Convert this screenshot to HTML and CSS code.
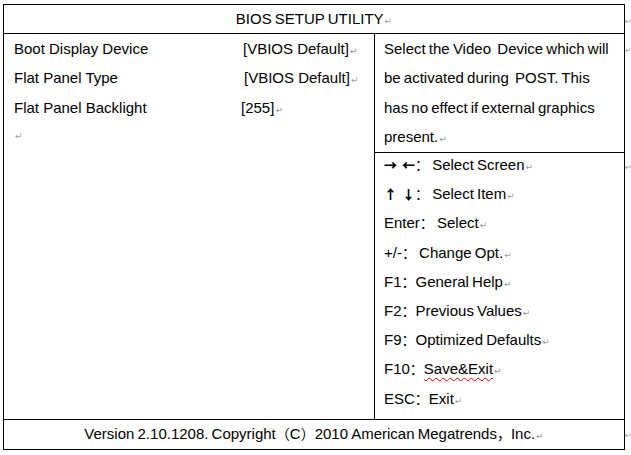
FILE: index.html
```html
<!DOCTYPE html>
<html lang="en">
<head>
<meta charset="utf-8">
<title>BIOS SETUP UTILITY</title>
<link rel="stylesheet" href="styles.css">
</head>
<body>
<div class="sheet">
  <div class="cell head">BIOS SETUP UTILITY<span class="pm">↵</span></div>
  <div class="mark m1"><span class="pm">↵</span></div>

  <div class="cell left">
    <div class="opt"><span class="lab">Boot Display Device</span><span class="val s2">[VBIOS Default]<span class="pm">↵</span></span></div>
    <div class="opt"><span class="lab">Flat Panel Type</span><span class="val s3">[VBIOS Default]<span class="pm">↵</span></span></div>
    <div class="opt"><span class="lab">Flat Panel Backlight</span><span class="val">[255]<span class="pm">↵</span></span></div>
    <div class="opt"><span class="pm">↵</span></div>
  </div>
  <div class="cell help">
    <p class="ln">Select the Video&nbsp; Device which will</p>
    <p class="ln">be activated during&nbsp; POST. This</p>
    <p class="ln">has no effect if external graphics</p>
    <p class="ln">present.<span class="pm">↵</span></p>
  </div>
  <div class="mark m2"><span class="pm">↵</span></div>

  <div class="cell keys">
    <p class="ln"><span class="arr">→ ←</span><span class="cjk">：</span> Select Screen<span class="pm">↵</span></p>
    <p class="ln"><span class="arr">↑ ↓</span><span class="cjk">：</span> Select Item<span class="pm">↵</span></p>
    <p class="ln">Enter<span class="cjk">：</span> Select<span class="pm">↵</span></p>
    <p class="ln">+/-<span class="cjk">：</span> Change Opt.<span class="pm">↵</span></p>
    <p class="ln">F1<span class="cjk">：</span>General Help<span class="pm">↵</span></p>
    <p class="ln">F2<span class="cjk">：</span>Previous Values<span class="pm">↵</span></p>
    <p class="ln">F9<span class="cjk">：</span>Optimized Defaults<span class="pm">↵</span></p>
    <p class="ln">F10<span class="cjk">：</span><span class="spell">Save&amp;Exit</span><span class="pm">↵</span></p>
    <p class="ln">ESC<span class="cjk">：</span>Exit<span class="pm">↵</span></p>
  </div>
  <div class="mark m3"><span class="pm">↵</span></div>

  <div class="cell foot">Version 2.10.1208. Copyright<span class="cjk">（</span>C<span class="cjk">）</span>2010 American Megatrends<span class="cjk">，</span>Inc.<span class="pm">↵</span></div>
  <div class="mark m4"><span class="pm">↵</span></div>
</div>
</body>
</html>
```

FILE: styles.css
```css
html, body {
  margin: 0;
  padding: 0;
  background: #ffffff;
}

body {
  padding: 4px 0 0 3px;
  overflow: hidden;
  font-family: "Liberation Sans", "Noto Sans CJK SC", sans-serif;
  font-size: 15px;
  word-spacing: -1px;
  color: #000000;
}

.sheet {
  display: grid;
  grid-template-columns: 371px 251px 6px;
  grid-template-rows: 29px 119px 267px 31px;
}

.cell {
  box-sizing: border-box;
  border-top: 1px solid #000;
  border-left: 1px solid #000;
  white-space: nowrap;
}

.head {
  grid-column: 1 / 3;
  grid-row: 1;
  border-right: 1px solid #000;
  text-align: center;
  line-height: 28px;
}

.left {
  grid-column: 1;
  grid-row: 2 / 4;
  padding-left: 10px;
  word-spacing: 0;
}

.opt {
  display: flex;
  line-height: 29.3px;
  height: 29.3px;
}

.lab {
  width: 227px;
  flex: none;
}

.val.s2 { padding-left: 2px; }
.val.s3 { padding-left: 3px; }

.help {
  grid-column: 2;
  grid-row: 2;
  border-right: 1px solid #000;
  padding-left: 9px;
}

.keys {
  grid-column: 2;
  grid-row: 3;
  border-right: 1px solid #000;
  padding-left: 9px;
}

.keys .ln:first-child {
  margin-top: -3px;
}

.ln {
  margin: 0;
  line-height: 29.3px;
  height: 29.3px;
}

.keys .ln {
  line-height: 29.2px;
  height: 29.2px;
}

.foot {
  grid-column: 1 / 3;
  grid-row: 4;
  border-right: 1px solid #000;
  border-bottom: 1px solid #000;
  text-align: center;
  line-height: 26px;
}

.cjk {
  font-family: "Noto Sans CJK SC", sans-serif;
  font-size: 14px;
}

.arr {
  font-family: "Noto Sans CJK SC", sans-serif;
  font-weight: 900;
  font-size: 13px;
  word-spacing: 2px;
}

.spell {
  text-decoration: underline wavy #e00000;
  text-decoration-thickness: 1px;
  text-underline-offset: 3px;
}

.pm {
  font-family: "DejaVu Sans", sans-serif;
  font-size: 9px;
  color: #9a9a9a;
  margin-left: 1px;
}

.mark {
  white-space: nowrap;
}

.mark .pm {
  font-size: 8px;
  margin-left: 0;
}

.m1 { grid-row: 1; grid-column: 3; line-height: 30px; }
.m2 { grid-row: 2; grid-column: 3; line-height: 30px; }
.m3 { grid-row: 3; grid-column: 3; line-height: 26px; }
.m4 { grid-row: 4; grid-column: 3; line-height: 28px; }
```
